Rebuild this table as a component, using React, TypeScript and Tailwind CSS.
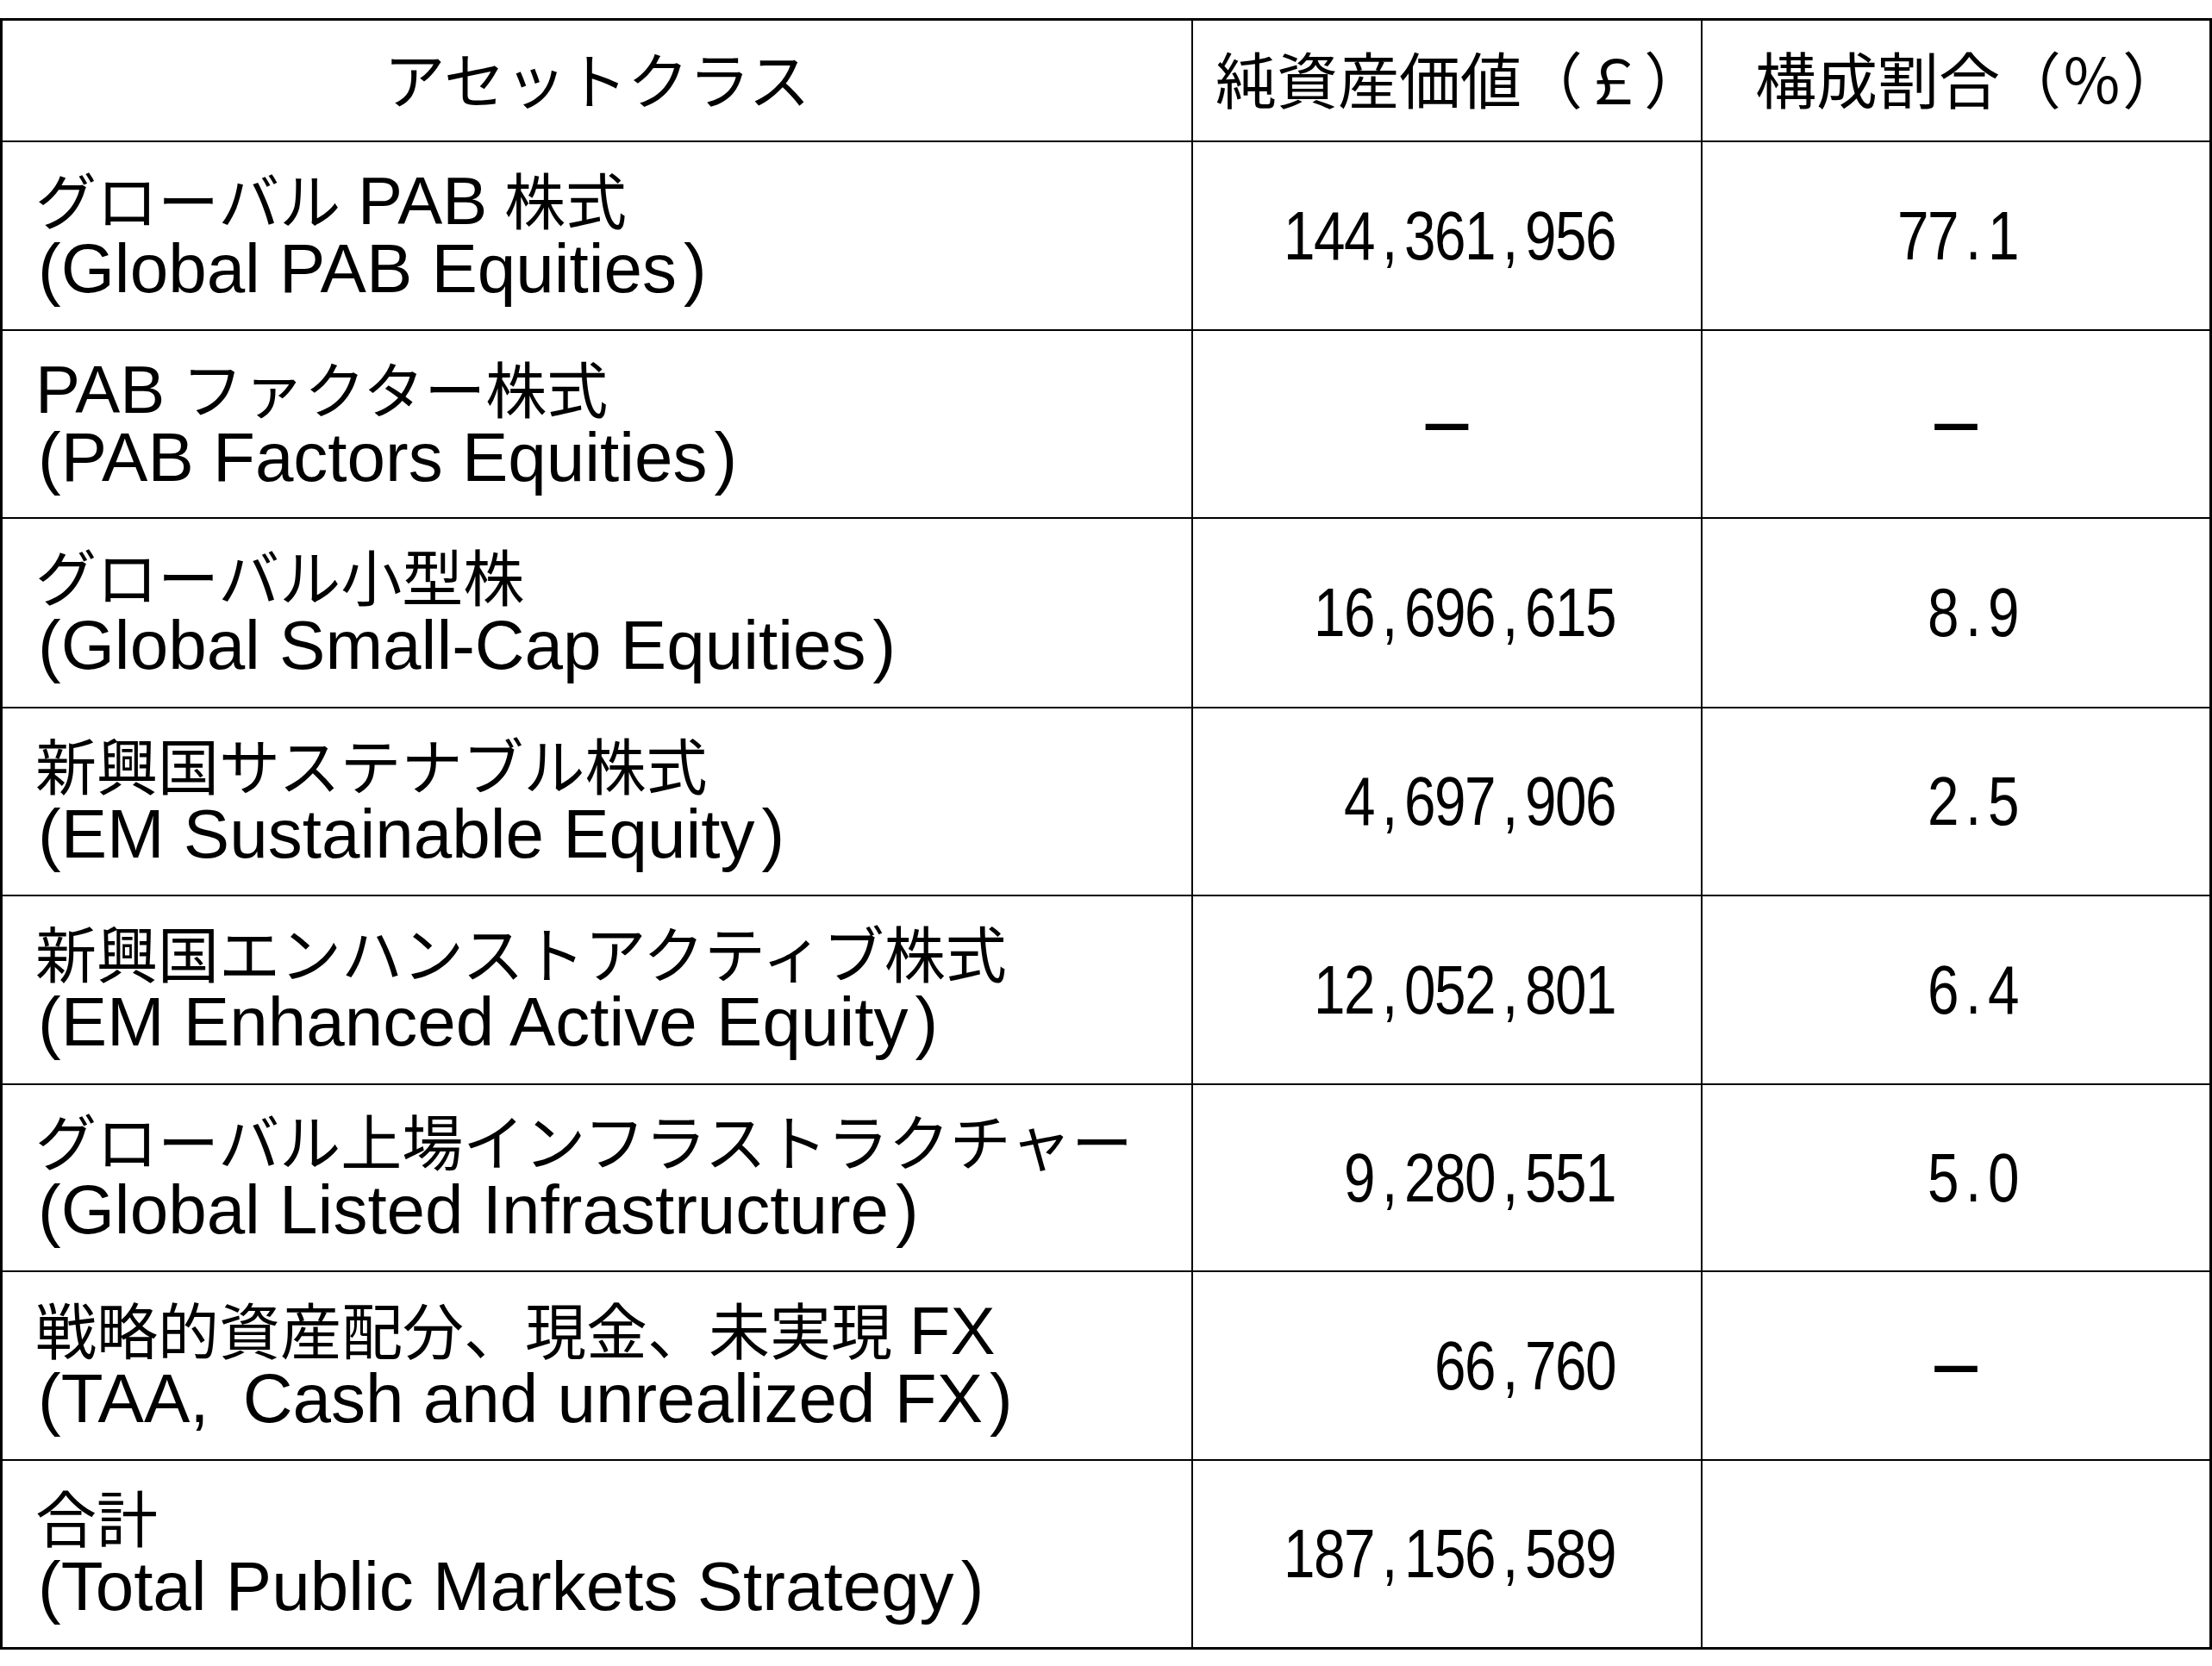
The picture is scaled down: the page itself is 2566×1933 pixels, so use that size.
import React from "react";

type Row = { jp: string; en: React.ReactNode; nav: string; pct: string; h: string };

const rows: Row[] = [
  { jp: "グローバル PAB 株式", en: "Global PAB Equities", nav: "144,361,956", pct: "77.1", h: "h-[219px]" },
  { jp: "PAB ファクター株式", en: "PAB Factors Equities", nav: "－", pct: "－", h: "h-[218px]" },
  { jp: "グローバル小型株", en: "Global Small-Cap Equities", nav: "16,696,615", pct: "8.9", h: "h-[220px]" },
  { jp: "新興国サステナブル株式", en: "EM Sustainable Equity", nav: "4,697,906", pct: "2.5", h: "h-[218px]" },
  { jp: "新興国エンハンストアクティブ株式", en: "EM Enhanced Active Equity", nav: "12,052,801", pct: "6.4", h: "h-[219px]" },
  { jp: "グローバル上場インフラストラクチャー", en: "Global Listed Infrastructure", nav: "9,280,551", pct: "5.0", h: "h-[217px]" },
  {
    jp: "戦略的資産配分、現金、未実現 FX",
    en: (
      <>
        TAA<span className="mr-[17px]">,</span> Cash and unrealized FX
      </>
    ),
    nav: "66,760",
    pct: "－",
    h: "h-[219px]",
  },
  { jp: "合計", en: "Total Public Markets Strategy", nav: "187,156,589", pct: "", h: "h-[218px]" },
];

function JpLine({ s }: { s: string }) {
  const parts = s.split(/([A-Za-z]+)/);
  return (
    <div className="text-[71px] leading-[75px]">
      {parts.map((p, i) =>
        /^[A-Za-z]+$/.test(p) ? (
          <span key={i} className="text-[78px]">
            {p}
          </span>
        ) : (
          <React.Fragment key={i}>{p}</React.Fragment>
        )
      )}
    </div>
  );
}

function Num({ s }: { s: string }) {
  return (
    <span className="inline-flex font-['Liberation_Sans',sans-serif] text-[80px] leading-[78px]">
      {[...s].map((c, i) => (
        <span key={i} className="flex w-[35px] justify-center">
          <span className="inline-block scale-x-[0.82]">{c}</span>
        </span>
      ))}
    </span>
  );
}

function Dash() {
  return (
    <span className="font-['Noto_Sans_CJK_JP',sans-serif] text-[70px] font-bold leading-[78px]">－</span>
  );
}

function ValueCell({ v, pr }: { v: string; pr: string }) {
  if (v === "－") {
    return (
      <div className="flex items-center justify-center border-l-2 border-black">
        <Dash />
      </div>
    );
  }
  return (
    <div className={`flex items-center justify-end border-l-2 border-black ${pr}`}>
      {v ? <Num s={v} /> : null}
    </div>
  );
}

export default function App() {
  return (
    <div className="min-h-[1933px] w-[2566px] bg-white pt-[21px] text-black">
      <div className="w-[2566px] border-[3px] border-black">
        {/* header */}
        <div className="grid h-[139px] grid-cols-[1379px_591px_590px] font-['Liberation_Sans','Noto_Sans_CJK_JP',sans-serif] text-[71px] leading-[78px]">
          <div className="flex items-center justify-center pt-[4px]">アセットクラス</div>
          <div className="flex items-center justify-center border-l-2 border-black pl-[26px] pt-[4px]">純資産価値（￡）</div>
          <div className="flex items-center justify-center border-l-2 border-black pl-[31px] pt-[4px]">構成割合（％）</div>
        </div>
        {rows.map((r, i) => (
          <div key={i} className={`grid grid-cols-[1379px_591px_590px] border-t-2 border-black ${r.h}`}>
            <div className="flex flex-col justify-center whitespace-nowrap pl-[38px] font-['Liberation_Sans','Noto_Sans_CJK_JP',sans-serif]">
              <JpLine s={r.jp} />
              <div className="text-[80px] leading-[78px]">
                <span className="ml-[3px]">(</span>
                {r.en}
                <span className="ml-[8px]">)</span>
              </div>
            </div>
            <ValueCell v={r.nav} pr="pr-[98px]" />
            <ValueCell v={r.pct} pr="pr-[221px]" />
          </div>
        ))}
      </div>
    </div>
  );
}
